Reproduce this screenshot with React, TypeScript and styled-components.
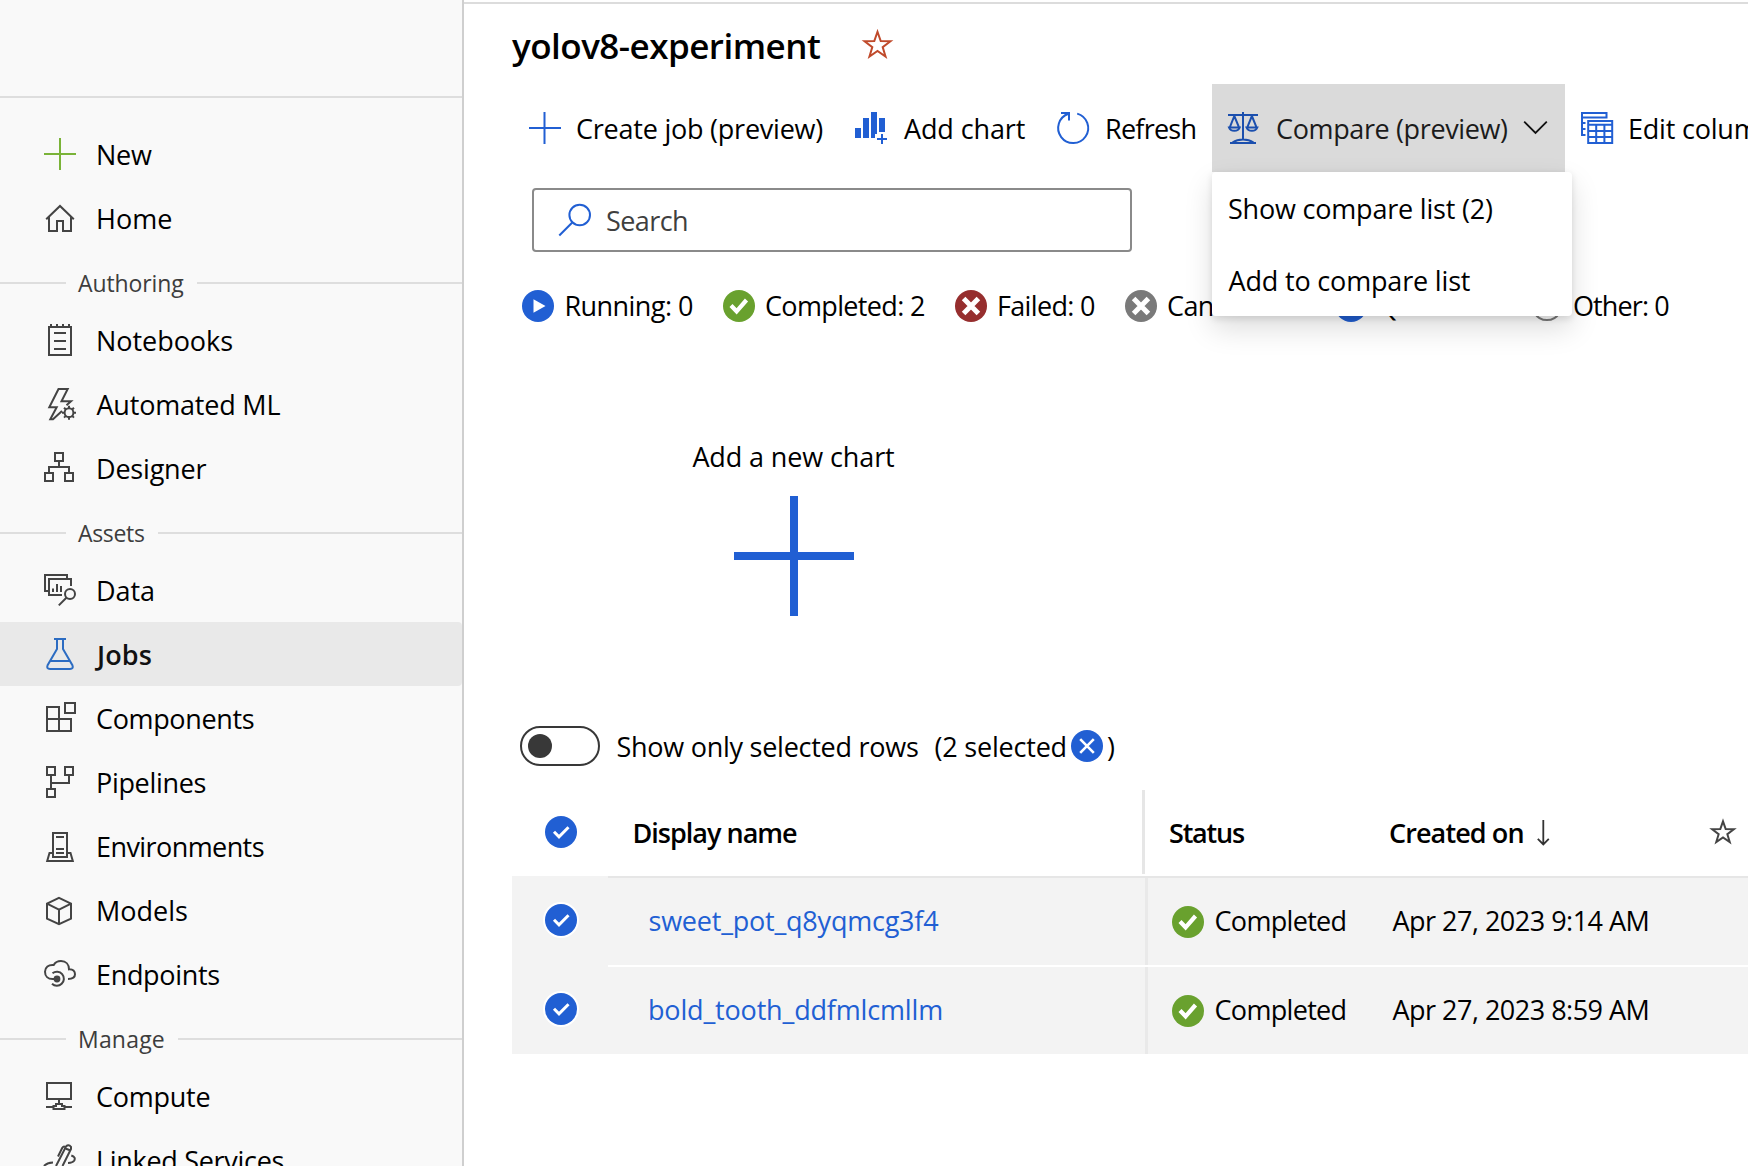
import React from 'react';
import styled, { createGlobalStyle } from 'styled-components';

const BLUE = '#215fd3';
const GREEN = '#69a12e';
const INK = '#444';

const Global = createGlobalStyle`
  *, *::before, *::after { box-sizing: border-box; }
  html, body { margin: 0; overflow: hidden; background: #fff; }
  body { font-family: "Open Sans", "Noto Sans", sans-serif; font-size: 27px; color: #000; }
`;

const Shell = styled.div`
  display: flex;
  width: 1748px;
  height: 1166px;
  overflow: hidden;
`;

const Text = styled.span<{ $ls?: number; $dx?: number }>`
  letter-spacing: ${(p) => p.$ls ?? 0}px;
  margin-left: ${(p) => p.$dx ?? 0}px;
  padding-top: 2px;
  white-space: pre;
  line-height: 36px;
`;

const Svg = styled.svg<{ $size?: number }>`
  display: block;
  flex: none;
  width: ${(p) => p.$size ?? 32}px;
  height: ${(p) => p.$size ?? 32}px;
  overflow: visible;
`;

/* ---------- sidebar ---------- */

const Sidebar = styled.nav`
  flex: none;
  width: 464px;
  height: 100%;
  background: #f9f9f9;
  border-right: 2px solid #cfcfcf;
  overflow: hidden;
`;

const SideTop = styled.div`
  height: 98px;
  margin-bottom: 24px;
  border-bottom: 2px solid #dedede;
`;

const NavItem = styled.a<{ $active?: boolean }>`
  display: flex;
  align-items: center;
  gap: 20px;
  height: 64px;
  padding-left: 44px;
  color: ${(p) => (p.$active ? '#111' : '#000')};
  background: ${(p) => (p.$active ? '#e9e9e9' : 'transparent')};
  border-radius: 0 4px 4px 0;
  font-weight: ${(p) => (p.$active ? 600 : 400)};
`;

const Section = styled.div`
  display: flex;
  align-items: center;
  height: 58px;
  padding-top: 8px;
  color: #3d3d3d;
  font-size: 23px;
  & > span { padding: 0 0 1px; }
  &::before, &::after { content: ''; height: 2px; background: #dedede; }
  &::before { width: 66px; margin-right: 12px; }
  &::after { flex: 1; margin-left: 13px; }
`;

/* ---------- main ---------- */

const Main = styled.main`
  flex: 1;
  min-width: 0;
  display: flex;
  flex-direction: column;
  margin-top: 2px;
  padding-left: 48px;
  border-top: 2px solid #dcdcdc;
`;

const TitleRow = styled.header`
  display: flex;
  align-items: center;
  gap: 41px;
  height: 80px;
`;

const Title = styled.h1`
  margin: 4px 0 0;
  width: 309px;
  font-size: 35px;
  font-weight: 600;
  letter-spacing: -0.52px;
  line-height: 48px;
  white-space: nowrap;
`;

const Toolbar = styled.div`
  display: flex;
  height: 88px;
  padding-left: 1px;
`;

const ToolSlot = styled.div<{ $w: number }>`
  position: relative;
  flex: none;
  width: ${(p) => p.$w}px;
`;

const ToolButton = styled.button<{ $open?: boolean }>`
  display: flex;
  align-items: center;
  gap: 15px;
  width: 100%;
  height: 100%;
  padding: 0 16px;
  border: 0;
  font: inherit;
  text-align: left;
  color: ${(p) => (p.$open ? '#1b1b1b' : '#000')};
  background: ${(p) => (p.$open ? '#dadada' : 'transparent')};
`;

const Menu = styled.div`
  position: absolute;
  z-index: 2;
  top: 100%;
  left: 0;
  width: 360px;
  background: #fff;
  border-radius: 4px;
  box-shadow: 0 12.8px 28.8px rgba(0, 0, 0, 0.132), 0 2.4px 7.2px rgba(0, 0, 0, 0.108);
`;

const MenuItem = styled.div`
  display: flex;
  align-items: center;
  height: 72px;
  padding-left: 16px;
`;

const SearchBox = styled.div`
  display: flex;
  align-items: center;
  gap: 15px;
  flex: none;
  width: 600px;
  height: 64px;
  margin: 16px 0 0 20px;
  padding-left: 25px;
  border: 2px solid #8a8a8a;
  border-radius: 4px;
  color: #3f3f3f;
`;

const StatusRow = styled.div`
  display: flex;
  flex: none;
  height: 64px;
  margin: 22px 0 0 10px;
`;

const StatusItem = styled.div<{ $w: number }>`
  display: flex;
  align-items: center;
  gap: 10px;
  flex: none;
  width: ${(p) => p.$w}px;
  & > span { padding: 0; }
`;

const ChartAdder = styled.section`
  display: flex;
  flex-direction: column;
  align-items: center;
  gap: 21px;
  flex: none;
  width: 563px;
  margin-top: 99px;
`;

const SelectionRow = styled.div`
  display: flex;
  align-items: center;
  flex: none;
  height: 40px;
  margin: 110px 0 24px 8px;
`;

const Toggle = styled.div`
  display: flex;
  align-items: center;
  width: 80px;
  height: 40px;
  margin-right: 16px;
  padding-left: 6px;
  border: 2px solid #383838;
  border-radius: 20px;
  &::before { content: ''; width: 24px; height: 24px; border-radius: 50%; background: #383838; }
`;

const ClearButton = styled.span`
  margin-left: 4px;
`;

const HeaderRow = styled.div`
  display: grid;
  grid-template-columns: 96px 537px 244px 321px 1fr;
  flex: none;
  height: 84px;
  margin-bottom: 2px;
  font-weight: 600;
`;

const HeadCell = styled.div<{ $pad?: number; $sep?: boolean }>`
  display: flex;
  align-items: center;
  padding-left: ${(p) => p.$pad ?? 0}px;
  border-right: ${(p) => (p.$sep ? '3px solid #e6e6e6' : '0')};
`;

const Row = styled.div`
  display: grid;
  grid-template-columns: 96px 540px 244px 1fr;
  flex: none;
  height: 89px;
  background: #f3f3f3;
`;

const Cell = styled.div<{ $pad?: number; $line?: string; $sep?: boolean }>`
  display: flex;
  align-items: center;
  gap: 10px;
  padding-left: ${(p) => p.$pad ?? 0}px;
  border-top: ${(p) => (p.$line ? `2px solid ${p.$line}` : '0')};
  & > span { padding: 0 0 1px; }
  ${(p) => p.$sep && `&::after { content: ''; width: 3px; align-self: stretch; margin-left: auto; background: #e9e9e9; }`}
`;

const CheckCell = styled(Cell)`
  padding-bottom: 1px;
`;

const RowLink = styled(Text)`
  color: ${BLUE};
`;

/* ---------- icons ---------- */

type LineProps = { d: string; color?: string; w?: number; size?: number; fill?: string; children?: React.ReactNode };
const Line = ({ d, color = INK, w = 2, size = 32, fill = 'none', children }: LineProps) => (
  <Svg $size={size} viewBox={`0 0 ${size} ${size}`} fill={fill} stroke={color} strokeWidth={w}>
    <path d={d} />
    {children}
  </Svg>
);

const starPoints = (cx: number, cy: number, r: number) =>
  Array.from({ length: 10 }, (_, i) => {
    const a = ((-90 + i * 36) * Math.PI) / 180;
    const k = i % 2 ? r * 0.4 : r;
    return `${(cx + k * Math.cos(a)).toFixed(2)},${(cy + k * Math.sin(a)).toFixed(2)}`;
  }).join(' ');

const Star = ({ size, color }: { size: number; color: string }) => (
  <Svg $size={size} viewBox={`0 0 ${size} ${size}`} fill="none" stroke={color} strokeWidth={2} strokeMiterlimit={10}>
    <polygon points={starPoints(size / 2, size * 0.53, size * 0.44)} />
  </Svg>
);

const Badge = ({ color, d, w = 3.6, ring }: { color: string; d: string; w?: number; ring?: boolean }) => (
  <Svg viewBox="0 0 32 32" fill="none">
    {ring && <circle cx="16" cy="16" r="18" fill="#fff" />}
    <circle cx="16" cy="16" r="16" fill={color} />
    <path d={d} stroke="#fff" strokeWidth={w} />
  </Svg>
);

const DoneBadge = () => <Badge color={GREEN} d="M8 15.5 13.6 21.3 23.5 10" w={4.2} />;
const RowCheck = ({ ring }: { ring?: boolean }) => <Badge color={BLUE} d="M9 15.8 14 20.8 23.5 11.3" w={3} ring={ring} />;
const CROSS = 'M8.6 8.4 23.4 23.6M23.4 8.4 8.6 23.6';

const gearTeeth = Array.from({ length: 8 }, (_, i) => {
  const a = (i * Math.PI) / 4;
  const p = (r: number) => `${(25 + r * Math.cos(a)).toFixed(2)} ${(24.7 + r * Math.sin(a)).toFixed(2)}`;
  return `M${p(4.5)}L${p(7)}`;
}).join('');

const navIcons: Record<string, React.ReactNode> = {
  new: <Line d="M16 0V32M0 16H32" color="#7ab338" />,
  home: <Line d="M2.2 17.2 16 4 29.8 17.2M5 15V29H13V19H19V29H27V15" />,
  notebooks: <Line d="M5 3H27V31H5ZM7 0V3M13 0V3M19 0V3M25 0V3M10 9H22M10 17H22M10 25H22" />,
  automl: (
    <Line d="M22.5 17.3 27 13.3H17.5L23.7 1H14.5L5.3 19.2H12.7L6.3 31.2H9L18 23">
      <circle cx="25" cy="24.7" r="4.4" />
      <path d={gearTeeth} />
    </Line>
  ),
  designer: <Line d="M11 1H19V9H11ZM15 9V15M5 21V15H25V21M1 21H9V29H1ZM21 21H29V29H21Z" />,
  data: (
    <Line d="M23 5V1H1V17H5M18 21H5V5H27V12M9 14.5V18M13 10V18M17 12V18M22.4 23.7 14.8 31.4">
      <circle cx="26" cy="20" r="5" />
    </Line>
  ),
  jobs: <Line color="#2c6cc2" d="M10 1H22M13 1V11L3.6 27.2Q2.2 31 6 31H26Q29.8 31 28.4 27.2L19 11V1M6.5 23H25.5" />,
  components: <Line d="M15 29V5H3V29H27V17H3M21 1H31V11H21Z" />,
  pipelines: <Line d="M3 1H11V9H3ZM21 1H29V9H21ZM3 23H11V31H3ZM7 9V23M25 9V17H7" />,
  environments: <Line d="M9 3H23V27H9ZM12 7H20M12 19H20M12 23H20M9 23H5.5L3.2 31H28.8L26.5 23H23" />,
  models: <Line d="M15 3.8 27 9.6V24.6L15 30.2 3 24.6V9.6ZM3 9.6 15 15.6 27 9.6M15 15.6V30.2" />,
  endpoints: (
    <Line d="M12 21H8.5C4 21 1 18 1 13.7 1 9.4 4.5 6.4 9.7 7 11 4.5 13.5 3 17 3 22 3 25 6.5 25 11.3 29 11 31 13.3 31 16.3 31 19.5 28.5 21 24 21M8.5 15.3A7 7 0 1 1 8 25.8">
      <circle cx="13" cy="21" r="3.4" fill={INK} stroke="none" />
    </Line>
  ),
  compute: <Line d="M3 3H27V19H3ZM15 19V24M2 27H10M20 27H28M9.5 29H20.5V26H18V24H12V26H9.5Z" />,
  linked: <Line d="M12 22 22 2.5Q24.500 0 27 2.8V5L18.5 22M22 4.8 26 6.3M14 12.5 18.3 3.8Q19.5 2 21 2.8M0 22Q3 18.5 9 18.5M27.3 11.5Q32 13 30.3 16.5 28.8 18.8 24 19" />,
};

const ChartIcon = () => (
  <Svg viewBox="0 0 32 32" fill={BLUE}>
    <path d="M0 16H6V26H0ZM8 6H14V26H8ZM16 0H22V22H20V26H16ZM24 6H30V20H24ZM26 22H28V26H32V28H28V32H26V28H22V26H26Z" />
  </Svg>
);

const ScalesIcon = () => (
  <Line
    color="#1b4fae"
    d="M0 3H30M15 0V28M6.3 4 2 14.8M6.3 4 10.8 14.8M23.9 4 19.5 14.8M23.9 4 28.3 14.8M1 15.5H11.7Q10.5 18.8 6.3 18.8 2.2 18.8 1 15.5ZM18.5 15.5H29.3Q28 18.8 23.9 18.8 19.8 18.8 18.5 15.5ZM2 31H28M4.5 30.5Q9 27.5 15 27.5 21 27.5 25.5 30.5"
  />
);

const ColumnsIcon = () => (
  <Line
    color={BLUE}
    d="M1 24V1H25.5V5.5H1M1 11H4.500M1 17H4.500M1 23H4.500M7.2 9H31.2V31H7.2ZM7.2 12.8H31.2M7.2 19H31.2M7.2 25H31.2M15.2 12.8V31M23.4 12.8V31"
  />
);

/* ---------- data ---------- */

type Nav = { icon: string; label: string; ls: number; dx?: number; active?: boolean };
const sections: { title?: string; ls?: number; items: Nav[] }[] = [
  {
    items: [
      { icon: 'new', label: 'New', ls: -0.25 },
      { icon: 'home', label: 'Home', ls: 0 },
    ],
  },
  {
    title: 'Authoring',
    ls: -0.1,
    items: [
      { icon: 'notebooks', label: 'Notebooks', ls: -0.05 },
      { icon: 'automl', label: 'Automated ML', ls: -0.2, dx: 0.5 },
      { icon: 'designer', label: 'Designer', ls: -0.2 },
    ],
  },
  {
    title: 'Assets',
    ls: -0.32,
    items: [
      { icon: 'data', label: 'Data', ls: -0.1 },
      { icon: 'jobs', label: 'Jobs', ls: 0.1, dx: 1, active: true },
      { icon: 'components', label: 'Components', ls: -0.35 },
      { icon: 'pipelines', label: 'Pipelines', ls: -0.32 },
      { icon: 'environments', label: 'Environments', ls: -0.58 },
      { icon: 'models', label: 'Models', ls: 0 },
      { icon: 'endpoints', label: 'Endpoints', ls: -0.33 },
    ],
  },
  {
    title: 'Manage',
    ls: 0.2,
    items: [
      { icon: 'compute', label: 'Compute', ls: -0.25 },
      { icon: 'linked', label: 'Linked Services', ls: -0.3 },
    ],
  },
];

const jobs = [
  { name: 'sweet_pot_q8yqmcg3f4', ls: -0.22, dx: 0.5, created: 'Apr 27, 2023 9:14 AM' },
  { name: 'bold_tooth_ddfmlcmllm', ls: -0.17, dx: 0, created: 'Apr 27, 2023 8:59 AM' },
];

export default function App() {
  return (
    <>
      <Global />
      <Shell>
        <Sidebar>
          <SideTop />
          {sections.map((s, i) => (
            <React.Fragment key={i}>
              {s.title && (
                <Section>
                  <Text $ls={s.ls}>{s.title}</Text>
                </Section>
              )}
              {s.items.map((n) => (
                <NavItem key={n.label} $active={n.active}>
                  {navIcons[n.icon]}
                  <Text $ls={n.ls} $dx={n.dx}>{n.label}</Text>
                </NavItem>
              ))}
            </React.Fragment>
          ))}
        </Sidebar>

        <Main>
          <TitleRow>
            <Title>yolov8-experiment</Title>
            <Star size={31} color="#c04a2b" />
          </TitleRow>

          <Toolbar>
            <ToolSlot $w={326}>
              <ToolButton>
                <Line d="M15.5 0V32M0 16H32" color={BLUE} />
                <Text $ls={-0.23}>Create job (preview)</Text>
              </ToolButton>
            </ToolSlot>
            <ToolSlot $w={202}>
              <ToolButton>
                <ChartIcon />
                <Text $ls={-0.12} $dx={2}>Add chart</Text>
              </ToolButton>
            </ToolSlot>
            <ToolSlot $w={171}>
              <ToolButton>
                <Line d="M20.2 1.6A15 15 0 1 1 11.5 1.8M4 1H12V8.5" color={BLUE} />
                <Text $ls={-0.75} $dx={1}>Refresh</Text>
              </ToolButton>
            </ToolSlot>
            <ToolSlot $w={353}>
              <ToolButton $open>
                <ScalesIcon />
                <Text $ls={-0.37} $dx={1}>Compare (preview)</Text>
                <Line size={24} color="#111" w={1.8} d="M1.2 5.7 12.5 17 23.8 5.7" />
              </ToolButton>
              <Menu>
                <MenuItem>
                  <Text $ls={-0.2}>Show compare list (2)</Text>
                </MenuItem>
                <MenuItem>
                  <Text $ls={-0.17} $dx={0.5}>Add to compare list</Text>
                </MenuItem>
              </Menu>
            </ToolSlot>
            <ToolSlot $w={230}>
              <ToolButton>
                <ColumnsIcon />
                <Text $ls={-0.2}>Edit columns</Text>
              </ToolButton>
            </ToolSlot>
          </Toolbar>

          <SearchBox>
            <Line color={BLUE} d="M13.3 18.5.3 31.5">
              <circle cx="20.7" cy="11" r="10.3" />
            </Line>
            <Text $ls={-0.59}>Search</Text>
          </SearchBox>

          <StatusRow>
            <StatusItem $w={201}>
              <Svg viewBox="0 0 32 32">
                <circle cx="16" cy="16" r="16" fill={BLUE} />
                <path d="M11.5 9.3 23.5 16 11.5 22.7Z" fill="#fff" />
              </Svg>
              <Text $ls={-0.56} $dx={0.5}>Running: 0</Text>
            </StatusItem>
            <StatusItem $w={232}>
              <DoneBadge />
              <Text $ls={-0.65}>Completed: 2</Text>
            </StatusItem>
            <StatusItem $w={170}>
              <Badge color="#962e2e" d={CROSS} w={5} />
              <Text $ls={-0.67}>Failed: 0</Text>
            </StatusItem>
            <StatusItem $w={210}>
              <Badge color="#7a7a7a" d={CROSS} w={5} />
              <Text $ls={-0.6}>Canceled: 0</Text>
            </StatusItem>
            <StatusItem $w={196}>
              <Badge color={BLUE} d="M9 16H23" />
              <Text $ls={-0.6} $dx={1}>Queued: 0</Text>
            </StatusItem>
            <StatusItem $w={150}>
              <Line color="#7a7a7a" d="M16 1.5A14.300 14.300 0 1 1 15.900 1.500Z" />
              <Text $ls={-0.88}>Other: 0</Text>
            </StatusItem>
          </StatusRow>

          <ChartAdder>
            <Text $ls={-0.12}>Add a new chart</Text>
            <Line size={120} w={8} color={BLUE} d="M60 0V120M0 60H120" />
          </ChartAdder>

          <SelectionRow>
            <Toggle />
            <Text $ls={-0.26} $dx={0.5}>Show only selected rows</Text>
            <Text $ls={-0.21} $dx={16}>(2 selected</Text>
            <ClearButton>
              <Badge color={BLUE} w={2.6} d="M9.2 9.2 22.8 22.8M22.8 9.2 9.2 22.8" />
            </ClearButton>
            <Text $dx={4}>)</Text>
          </SelectionRow>

          <HeaderRow>
            <HeadCell $pad={32.5}>
              <RowCheck />
            </HeadCell>
            <HeadCell $pad={24.5} $sep>
              <Text $ls={-0.99}>Display name</Text>
            </HeadCell>
            <HeadCell $pad={24}>
              <Text $ls={-1.2}>Status</Text>
            </HeadCell>
            <HeadCell>
              <Text $ls={-0.9}>Created on</Text>
              <Line size={24} color="#333" w={1.8} d="M19.3 0V25M13.8 18.9 19.3 24.5 24.8 18.9" />
            </HeadCell>
            <HeadCell>
              <Star size={26} color="#444" />
            </HeadCell>
          </HeaderRow>
          {jobs.map((j, i) => {
            const line = i ? '#fff' : '#e6e6e6';
            return (
              <Row key={j.name}>
                <CheckCell $pad={32.5}>
                  <RowCheck ring />
                </CheckCell>
                <Cell $pad={40} $line={line} $sep>
                  <RowLink $ls={j.ls} $dx={j.dx}>{j.name}</RowLink>
                </Cell>
                <Cell $pad={24} $line={line}>
                  <DoneBadge />
                  <Text $ls={-0.68} $dx={0.5}>Completed</Text>
                </Cell>
                <Cell $line={line}>
                  <Text $ls={-0.51} $dx={0.5}>{j.created}</Text>
                </Cell>
              </Row>
            );
          })}
        </Main>
      </Shell>
    </>
  );
}
